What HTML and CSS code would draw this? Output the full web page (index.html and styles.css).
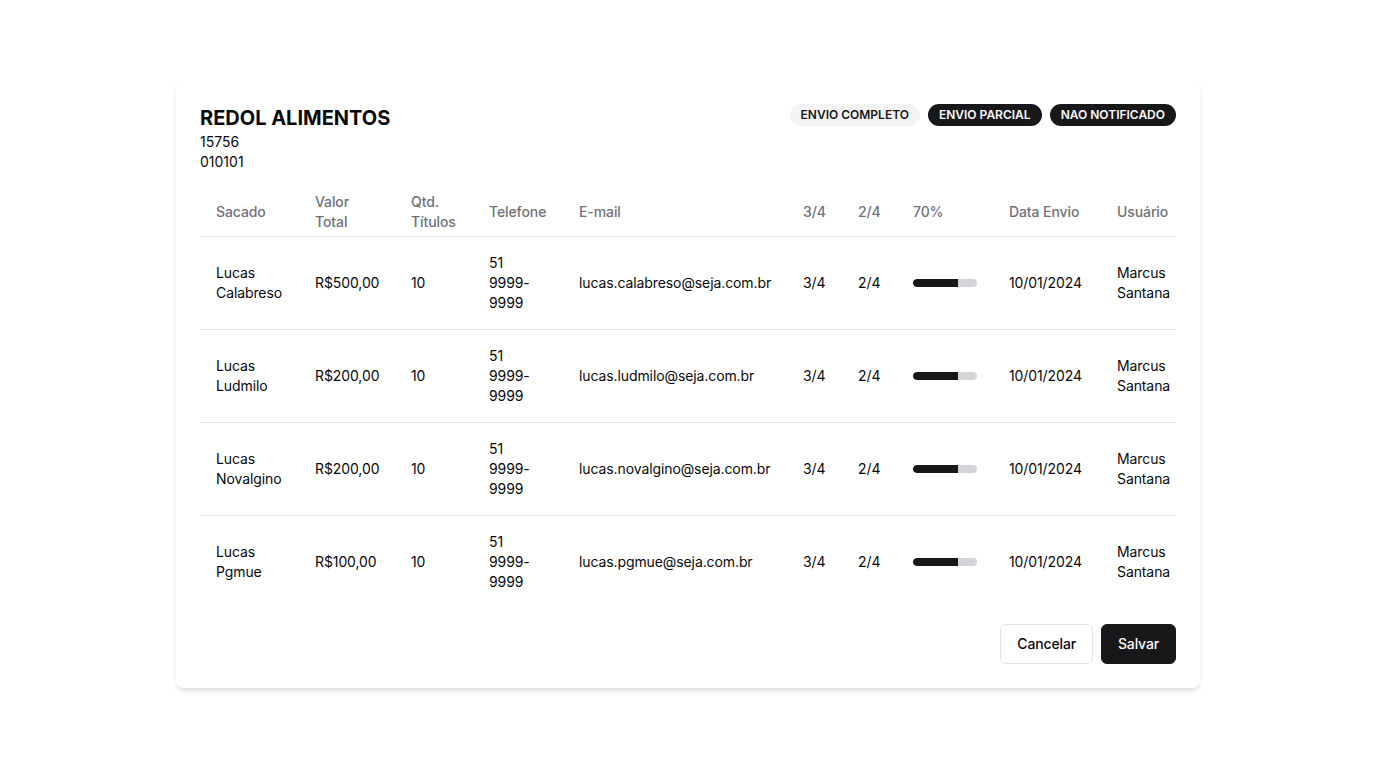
FILE: index.html
```html
<!DOCTYPE html>
<html lang="pt-BR">
<head>
<meta charset="utf-8">
<title>Redol Alimentos</title>
<link rel="stylesheet" href="styles.css">
</head>
<body>
<main class="page">
  <section class="card">
    <header class="card-head">
      <div class="company">
        <h1 class="company-name">REDOL ALIMENTOS</h1>
        <div class="company-line">15756</div>
        <div class="company-line">010101</div>
      </div>
      <div class="badges">
        <span class="badge badge-light">ENVIO COMPLETO</span>
        <span class="badge badge-dark">ENVIO PARCIAL</span>
        <span class="badge badge-dark">NAO NOTIFICADO</span>
      </div>
    </header>
    <div class="table-wrap">
      <table class="table">
        <colgroup>
          <col class="c1"><col class="c2"><col class="c3"><col class="c4"><col class="c5">
          <col class="c6"><col class="c7"><col class="c8"><col class="c9"><col class="c10">
        </colgroup>
        <thead>
          <tr>
            <th>Sacado</th><th>Valor Total</th><th>Qtd. Títulos</th><th>Telefone</th><th>E-mail</th>
            <th>3/4</th><th>2/4</th><th>70%</th><th>Data Envio</th><th>Usuário</th>
          </tr>
        </thead>
        <tbody>
          <tr>
            <td>Lucas Calabreso</td><td>R$500,00</td><td>10</td><td>51 9999-9999</td><td>lucas.calabreso@seja.com.br</td>
            <td>3/4</td><td>2/4</td><td><div class="progress"><div class="progress-fill" style="width:70%"></div></div></td><td>10/01/2024</td><td>Marcus Santana</td>
          </tr>
          <tr>
            <td>Lucas Ludmilo</td><td>R$200,00</td><td>10</td><td>51 9999-9999</td><td>lucas.ludmilo@seja.com.br</td>
            <td>3/4</td><td>2/4</td><td><div class="progress"><div class="progress-fill" style="width:70%"></div></div></td><td>10/01/2024</td><td>Marcus Santana</td>
          </tr>
          <tr>
            <td>Lucas Novalgino</td><td>R$200,00</td><td>10</td><td>51 9999-9999</td><td>lucas.novalgino@seja.com.br</td>
            <td>3/4</td><td>2/4</td><td><div class="progress"><div class="progress-fill" style="width:70%"></div></div></td><td>10/01/2024</td><td>Marcus Santana</td>
          </tr>
          <tr>
            <td>Lucas Pgmue</td><td>R$100,00</td><td>10</td><td>51 9999-9999</td><td>lucas.pgmue@seja.com.br</td>
            <td>3/4</td><td>2/4</td><td><div class="progress"><div class="progress-fill" style="width:70%"></div></div></td><td>10/01/2024</td><td>Marcus Santana</td>
          </tr>
        </tbody>
      </table>
    </div>
    <footer class="actions">
      <button class="btn btn-outline" type="button">Cancelar</button>
      <button class="btn btn-primary" type="button">Salvar</button>
    </footer>
  </section>
</main>
</body>
</html>
```
FILE: styles.css
```css
* { box-sizing: border-box; }
html, body { margin: 0; padding: 0; }
body {
  font-family: Inter, "Noto Sans", "Liberation Sans", sans-serif;
  color: #09090b;
  background: #ffffff;
  font-size: 14px;
  line-height: 20px;
}
.page {
  min-height: 100vh;
  display: flex;
  align-items: center;
  justify-content: center;
}
.card {
  width: 1024px;
  background: #fff;
  border-radius: 8px;
  padding: 24px;
  box-shadow: 0 4px 6px -1px rgba(0,0,0,0.1), 0 2px 4px -2px rgba(0,0,0,0.1);
}
.card-head {
  display: flex;
  justify-content: space-between;
  align-items: flex-start;
}
.company-name {
  margin: 0;
  font-size: 20px;
  line-height: 28px;
  font-weight: 700;
}
.company-line { font-size: 14px; line-height: 20px; }
.badges { display: flex; gap: 8px; }
.badge {
  display: inline-flex;
  align-items: center;
  border: 1px solid transparent;
  border-radius: 9999px;
  padding: 2px 10px;
  font-size: 12px;
  line-height: 16px;
  font-weight: 600;
}
.badge-light { background: #f4f4f5; color: #18181b; }
.badge-dark { background: #18181b; color: #fafafa; }
.table-wrap { margin-top: 16px; width: 100%; overflow: visible; }
.table {
  width: 976px;
  table-layout: fixed;
  border-collapse: collapse;
  font-size: 14px;
  line-height: 20px;
  letter-spacing: -0.1px;
}
.c1 { width: 99px; } .c2 { width: 96px; } .c3 { width: 78px; } .c4 { width: 90px; }
.c5 { width: 224px; } .c6 { width: 55px; } .c7 { width: 55px; } .c8 { width: 96px; }
.c9 { width: 108px; } .c10 { width: 75px; }
.table th {
  height: 48px;
  padding: 0 16px;
  text-align: left;
  vertical-align: middle;
  font-weight: 500;
  color: #71717a;
}
.table thead tr { border-bottom: 1px solid #e4e4e7; }
.table tbody tr { border-bottom: 1px solid #e4e4e7; }
.table tbody tr:last-child { border-bottom: 0; }
.table td {
  padding: 16px;
  vertical-align: middle;
}
.progress {
  width: 64px;
  height: 8px;
  border-radius: 9999px;
  background: #d4d4d8;
  overflow: hidden;
}
.progress-fill { height: 100%; background: #18181b; border-radius: 9999px 0 0 9999px; }
.actions {
  margin-top: 16px;
  display: flex;
  justify-content: flex-end;
  gap: 8px;
}
.btn {
  height: 40px;
  padding: 0 16px;
  border-radius: 6px;
  font-family: inherit;
  font-size: 14px;
  font-weight: 500;
  letter-spacing: -0.15px;
  cursor: pointer;
}
.btn-outline { background: #fff; border: 1px solid #e4e4e7; color: #09090b; }
.btn-primary { background: #18181b; border: 1px solid #18181b; color: #fafafa; }
```
